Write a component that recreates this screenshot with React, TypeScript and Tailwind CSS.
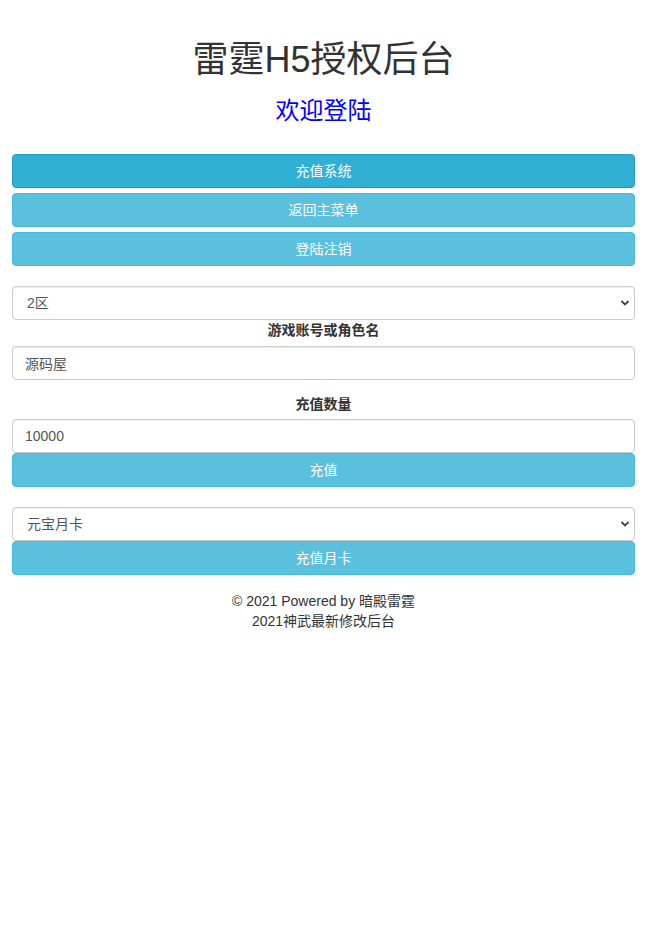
import React from "react";

const font = {
  fontFamily: '"Liberation Sans", Arial, "Noto Sans CJK SC", sans-serif',
};

function InfoButton({ label, active = false }: { label: string; active?: boolean }) {
  return (
    <button
      type="button"
      className={
        active
          ? "block w-full h-[34px] rounded-[4px] border border-[#269abc] bg-[#31b0d5] text-[14px] leading-[20px] text-white"
          : "block w-full h-[34px] rounded-[4px] border border-[#46b8da] bg-[#5bc0de] text-[14px] leading-[20px] text-white"
      }
    >
      {label}
    </button>
  );
}

function Field({ value }: { value: string }) {
  return (
    <input
      readOnly
      value={value}
      className="block w-full h-[34px] rounded-[4px] border border-[#ccc] bg-white px-3 text-[14px] text-[#555] shadow-[inset_0_1px_1px_rgba(0,0,0,0.075)] outline-none"
    />
  );
}

function Picker({ options }: { options: string[] }) {
  return (
    <div className="relative">
      <select
        defaultValue={options[0]}
        className="block w-full h-[34px] appearance-none rounded-[4px] border border-[#ccc] bg-white pl-[14px] pr-8 text-[14px] text-[#555] shadow-[inset_0_1px_1px_rgba(0,0,0,0.075)] outline-none"
      >
        {options.map((o) => (
          <option key={o}>{o}</option>
        ))}
      </select>
      <svg
        className="pointer-events-none absolute right-[5px] top-[13px]"
        width="10"
        height="8"
        viewBox="0 0 10 8"
      >
        <path d="M1.5 2 L5 5.5 L8.5 2" fill="none" stroke="#444" strokeWidth="1.8" />
      </svg>
    </div>
  );
}

function Label({ text, gap }: { text: string; gap: "sm" | "md" }) {
  return (
    <label
      className={
        gap === "md"
          ? "block text-center text-[14px] leading-[20px] font-bold text-[#333] mb-[6px]"
          : "block text-center text-[14px] leading-[20px] font-bold text-[#333] mb-[5px]"
      }
    >
      {text}
    </label>
  );
}

export default function App() {
  return (
    <div className="min-h-[938px] bg-white px-3 text-[#333]" style={font}>
      <h1 className="pt-[40px] text-center text-[36px] leading-[40px] text-[#333]">雷霆H5授权后台</h1>
      <h3 className="mt-[18px] text-center text-[24px] leading-[26px] text-[#0000ff]">欢迎登陆</h3>

      <div className="mt-[30px] flex flex-col gap-[5px]">
        <InfoButton label="充值系统" active />
        <InfoButton label="返回主菜单" />
        <InfoButton label="登陆注销" />
      </div>

      <div className="mt-[20px]">
        <Picker options={["2区", "1区", "3区"]} />
        <Label text="游戏账号或角色名" gap="md" />
        <Field value="源码屋" />
      </div>

      <div className="mt-[14px]">
        <Label text="充值数量" gap="sm" />
        <Field value="10000" />
        <InfoButton label="充值" />
      </div>

      <div className="mt-[20px]">
        <Picker options={["元宝月卡", "至尊月卡"]} />
        <InfoButton label="充值月卡" />
      </div>

      <footer className="mt-[16px] text-center text-[14px] leading-[20px] text-[#333]">
        <p>© 2021 Powered by 暗殿雷霆</p>
        <p>2021神武最新修改后台</p>
      </footer>
    </div>
  );
}
